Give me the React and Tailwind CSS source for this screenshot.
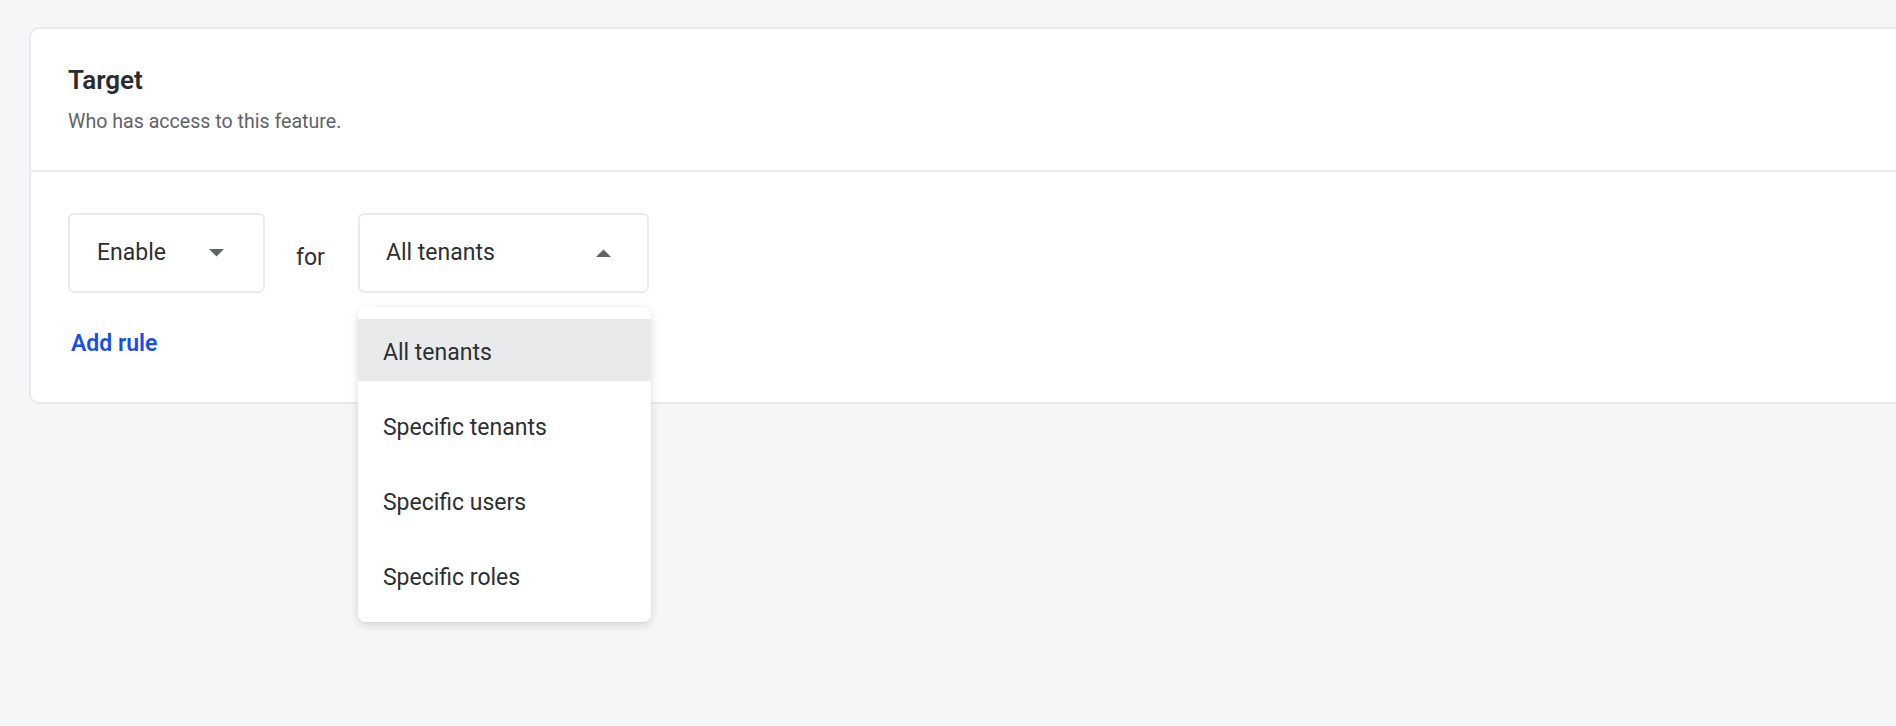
import React from "react";

function Caret({ up = false }) {
  return (
    <svg width="15" height="8" viewBox="0 0 15 8" className="shrink-0">
      {up ? (
        <polygon points="0,8 7.5,0.5 15,8" fill="#5f6368" />
      ) : (
        <polygon points="0,0 15,0 7.5,7.5" fill="#5f6368" />
      )}
    </svg>
  );
}

export default function App() {
  const items = ["All tenants", "Specific tenants", "Specific users", "Specific roles"];
  return (
    <div
      className="w-full h-[726px] overflow-hidden bg-[#f5f6f8] pt-[27px]"
      style={{ fontFamily: "Roboto, 'Liberation Sans', sans-serif" }}
    >
      <div className="ml-[29px] w-[1900px] bg-white border-2 border-[#e9eaed] rounded-[10px]">
        {/* header */}
        <div className="px-[37px] pt-[35px] pb-[35px] border-b-2 border-[#e9eaed]">
          <h2 className="text-[26px] leading-[32px] font-semibold text-[#2a2c30]">Target</h2>
          <p className="mt-[13px] text-[19.6px] leading-[26px] text-[#5f6368]">Who has access to this feature.</p>
        </div>
        {/* body */}
        <div className="px-[37px] pt-[41px] pb-[44px]">
          <div className="flex items-center">
            <div className="w-[197px] h-[80px] border-2 border-[#e9eaed] rounded-[6px] flex items-center justify-between pl-[27px] pr-[39px]">
              <span className="text-[23px] leading-[28px] text-[#2d2f33]">Enable</span>
              <Caret />
            </div>
            <span className="ml-[31px] mr-[33px] mt-[10px] text-[23px] leading-[28px] text-[#2d2f33]">for</span>
            <div className="relative">
              <div className="w-[291px] h-[80px] border-2 border-[#e9eaed] rounded-[6px] flex items-center justify-between pl-[26px] pr-[36px]">
                <span className="text-[23px] leading-[28px] text-[#2d2f33]">All tenants</span>
                <Caret up />
              </div>
              <div className="absolute left-0 top-[94px] w-[293px] bg-white rounded-[8px] shadow-[0_3px_10px_rgba(0,0,0,0.14)] pt-[12px] pb-[16px] z-10">
                {items.map((it, i) => (
                  <div
                    key={it}
                    className={
                      (i === 0 ? "bg-[#e9eaec] " : "") +
                      (i > 0 ? "mt-[13px] " : "") +
                      "h-[62px] pt-[20px] pl-[25px] text-[23px] leading-[28px] text-[#2d2f33]"
                    }
                  >
                    {it}
                  </div>
                ))}
              </div>
            </div>
          </div>
          <div className="mt-[37px] ml-[3px] text-[23px] leading-[28px] font-semibold text-[#1a4ee6]">Add rule</div>
        </div>
      </div>
    </div>
  );
}
